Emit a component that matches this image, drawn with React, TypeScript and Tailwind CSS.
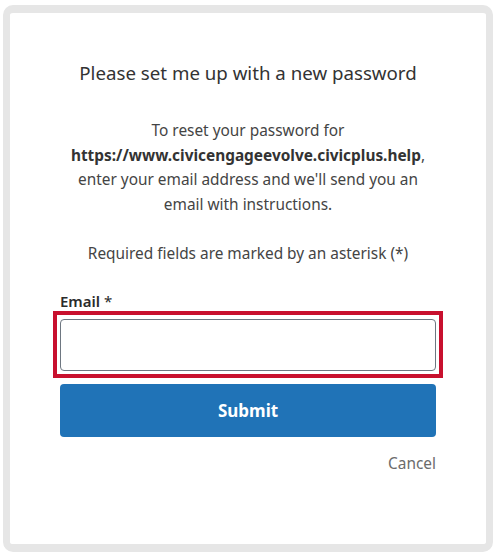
export default function App() {
  return (
    <div className="min-h-[557px] bg-white pl-[3px] pt-[5px]" style={{ fontFamily: '"Noto Sans", "Open Sans", sans-serif' }}>
      <div className="w-[490px] h-[547px] rounded-[10px] border-x-[7px] border-y-[8px] border-[#e6e6e6] bg-white">
        <div className="px-[50px] pt-[48px]">
          <h1 className="text-center text-[18.7px] leading-[24px] text-[#333333]">Please set me up with a new password</h1>

          <p className="mt-[34px] text-center text-[15.4px] leading-[24.6px] text-[#444444]">
            To reset your password for <strong className="font-bold text-[#333333]">https://www.civicengageevolve.civicplus.help</strong>,
            enter your email address and we'll send you an email with instructions.
          </p>

          <p className="mt-[25px] text-center text-[15.4px] leading-[24px] text-[#444444]">Required fields are marked by an asterisk (*)</p>

          <form className="mt-[25px]" onSubmit={(e) => e.preventDefault()}>
            <label htmlFor="email" className="block text-[15px] leading-[20px] font-semibold text-[#2b2b2b]">
              Email <span className="font-normal">*</span>
            </label>
            <div className="-mx-[7px] border-4 border-[#c8102e] px-[3px] pt-[4px] pb-[3px]">
              <input
                id="email"
                type="email"
                className="block w-full h-[52px] rounded-[4px] border border-[#6e7781] bg-white px-3 outline-none"
              />
            </div>
            <button type="submit" className="mt-[6px] block w-full h-[53px] rounded-[4px] bg-[#2073b7] text-[17px] font-bold text-white">
              Submit
            </button>
            <div className="mt-[17px] flex justify-end">
              <a href="#" className="text-[15.4px] leading-[20px] text-[#6b6b6b]">Cancel</a>
            </div>
          </form>
        </div>
      </div>
    </div>
  );
}
